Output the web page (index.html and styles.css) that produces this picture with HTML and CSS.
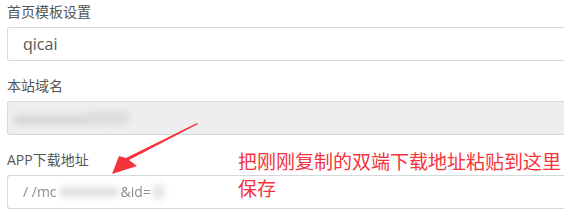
FILE: index.html
```html
<!DOCTYPE html>
<html lang="zh-CN">
<head>
  <meta charset="UTF-8">
  <meta name="viewport" content="width=device-width, initial-scale=1.0">
  <title>站点设置</title>
  <link rel="stylesheet" href="styles.css">
</head>
<body>
  <div class="settings">
    <div class="form-group">
      <label class="form-label">首页模板设置</label>
      <div class="form-input">qicai</div>
    </div>

    <div class="form-group">
      <label class="form-label">本站域名</label>
      <div class="form-input disabled">
        <span class="smudge smudge-a"></span>
        <span class="smudge smudge-b"></span>
      </div>
    </div>

    <div class="form-group">
      <label class="form-label">APP下载地址</label>
      <div class="form-input">
        <span class="faint">/ /mc</span>
        <span class="smudge smudge-c"></span>
        <span class="faint">&amp;id=</span>
        <span class="smudge smudge-d"></span>
      </div>
    </div>
  </div>

  <svg class="arrow" width="564" height="220" viewBox="0 0 564 220">
    <path d="M198 124 L129 160 L137 166 L112 174 L119 156 L126 158 L197 123 Z" fill="#f5333c"/>
  </svg>

  <div class="note">把刚刚复制的双端下载地址粘贴到这里保存</div>
</body>
</html>
```

FILE: styles.css
```css
body {
  margin: 0;
  padding: 0;
  background: #ffffff;
  font-family: 'Open Sans', 'Noto Sans CJK SC', sans-serif;
  color: #555555;
  width: 564px;
  height: 220px;
  overflow: hidden;
  position: relative;
}

.settings {
  padding: 2px 0 0 7px;
}

.form-group {
  margin-bottom: 15px;
}

.form-label {
  display: block;
  font-size: 14px;
  line-height: 20px;
  margin-bottom: 5px;
  color: #555555;
}

.form-input {
  width: 557px;
  height: 34px;
  box-sizing: border-box;
  border: 1px solid #d2dbdb;
  border-right: none;
  border-radius: 3px 0 0 3px;
  padding: 0 15px;
  font-size: 16px;
  line-height: 32px;
  color: #555555;
  background: #ffffff;
  display: flex;
  align-items: center;
}

.form-input.disabled {
  background: #eeeeee;
  padding-left: 5px;
}

.smudge {
  display: inline-block;
  height: 10px;
  border-radius: 5px;
  background: #d8d8d8;
  filter: blur(3px);
}

.smudge-a {
  width: 80px;
  margin-top: 4px;
}

.smudge-b {
  width: 40px;
  height: 14px;
  margin-left: -4px;
  background: #dcdcdc;
}

.smudge-c {
  width: 60px;
  background: #e0e0e0;
  margin: 0 2px;
}

.smudge-d {
  width: 12px;
  height: 16px;
  background: #e6e6e6;
  margin-left: 2px;
}

.faint {
  color: #8c8c8c;
  font-size: 14px;
  filter: blur(0.6px);
}

.arrow {
  position: absolute;
  top: 0;
  left: 0;
}

.note {
  position: absolute;
  left: 238px;
  top: 147px;
  width: 326px;
  font-family: 'Noto Sans CJK SC', sans-serif;
  font-size: 19px;
  line-height: 27px;
  color: #f5333c;
}
```
